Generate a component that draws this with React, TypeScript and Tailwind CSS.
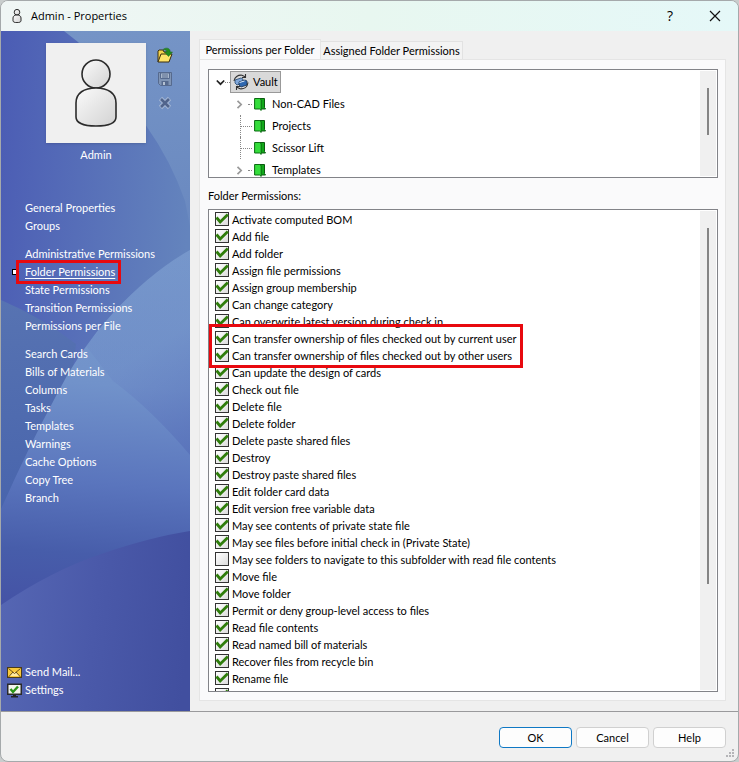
import type { ReactNode } from 'react';

const navGroups = [
  ['General Properties', 'Groups'],
  ['Administrative Permissions', 'Folder Permissions', 'State Permissions', 'Transition Permissions', 'Permissions per File'],
  ['Search Cards', 'Bills of Materials', 'Columns', 'Tasks', 'Templates', 'Warnings', 'Cache Options', 'Copy Tree', 'Branch'],
];

const before = [
  'Activate computed BOM',
  'Add file',
  'Add folder',
  'Assign file permissions',
  'Assign group membership',
  'Can change category',
  'Can overwrite latest version during check in',
];

const highlighted = [
  'Can transfer ownership of files checked out by current user',
  'Can transfer ownership of files checked out by other users',
];

const after = [
  'Can update the design of cards',
  'Check out file',
  'Delete file',
  'Delete folder',
  'Delete paste shared files',
  'Destroy',
  'Destroy paste shared files',
  'Edit folder card data',
  'Edit version free variable data',
  'May see contents of private state file',
  'May see files before initial check in (Private State)',
  'May see folders to navigate to this subfolder with read file contents',
  'Move file',
  'Move folder',
  'Permit or deny group-level access to files',
  'Read file contents',
  'Read named bill of materials',
  'Recover files from recycle bin',
  'Rename file',
  '',
];

const unchecked = ['May see folders to navigate to this subfolder with read file contents'];

const folders = [
  { name: 'Non-CAD Files', expandable: true },
  { name: 'Projects', expandable: false },
  { name: 'Scissor Lift', expandable: false },
  { name: 'Templates', expandable: true },
];

function Backdrop() {
  return (
    <svg className="absolute inset-0 h-full w-full" viewBox="0 0 189 680" preserveAspectRatio="none" aria-hidden="true">
      <defs>
        <linearGradient id="base" x1="0" y1="0" x2="1" y2="0.25">
          <stop offset="0" stopColor="#4b5cb4" />
          <stop offset="1" stopColor="#6484bd" />
        </linearGradient>
        <linearGradient id="corner" x1="0" y1="0" x2="0" y2="1">
          <stop offset="0" stopColor="#7594c6" />
          <stop offset="1" stopColor="#6a89c0" />
        </linearGradient>
        <linearGradient id="left" x1="0" y1="0" x2="0" y2="1">
          <stop offset="0" stopColor="#5773b2" />
          <stop offset="1" stopColor="#4763ac" />
        </linearGradient>
        <linearGradient id="sail" gradientUnits="userSpaceOnUse" x1="110" y1="215" x2="80" y2="610">
          <stop offset="0" stopColor="#7a9ccd" />
          <stop offset="0.35" stopColor="#7192ca" />
          <stop offset="0.6" stopColor="#5a75bd" />
          <stop offset="0.78" stopColor="#475daa" />
          <stop offset="1" stopColor="#434da3" />
        </linearGradient>
        <linearGradient id="shade" gradientUnits="userSpaceOnUse" x1="130" y1="330" x2="189" y2="425">
          <stop offset="0" stopColor="#6178bf" stopOpacity="0.15" />
          <stop offset="1" stopColor="#566fb8" stopOpacity="0.7" />
        </linearGradient>
        <linearGradient id="floor" x1="0" y1="0.4" x2="1" y2="0.5">
          <stop offset="0" stopColor="#5566b3" />
          <stop offset="0.5" stopColor="#4a59a9" />
          <stop offset="1" stopColor="#414f9f" />
        </linearGradient>
      </defs>
      <rect width="189" height="680" fill="url(#base)" />
      <path d="M63 0 L77 11 Q120 55 146 96 Q170 130 184 170 L189 195 V0Z" fill="url(#corner)" />
      <path d="M0 269 Q40 286 75 313 L60 440 L0 500Z" fill="url(#left)" />
      <path d="M189 219 Q150 241 112 282 Q78 319 55 365 Q28 415 0 478 V680 H189Z" fill="url(#sail)" />
      <path d="M85 315 L112 350 Q150 378 189 424 V219 Q150 241 112 282Z" fill="url(#shade)" />
      <path d="M0 574 Q50 540 100 523 Q150 506 189 500 V680 H0Z" fill="url(#floor)" />
    </svg>
  );
}

function Person({ className, thick }: { className: string; thick: number }) {
  return (
    <svg className={className} viewBox="0 0 44 70" aria-hidden="true">
      <defs>
        <linearGradient id="person" x1="0" y1="0" x2="1" y2="1">
          <stop offset="0" stopColor="#fbfbfb" />
          <stop offset="1" stopColor="#d2d2d2" />
        </linearGradient>
      </defs>
      <g fill="url(#person)" stroke="#2b2b2b" strokeWidth={thick}>
        <circle cx="22" cy="16" r="14" />
        <path d="M2 45 C2 35 10 30 22 30 S42 35 42 45 V59 C42 65 34 68 22 68 S2 65 2 59Z" />
      </g>
    </svg>
  );
}

function OpenIcon() {
  return (
    <svg className="size-4" viewBox="0 0 16 16" aria-hidden="true">
      <path d="M1 15V4l1-1h4l1 2h5v3" fill="#f5d34c" stroke="#3a2e10" />
      <path d="M1 15L4 7h11l-3 8Z" fill="#ffe46a" stroke="#3a2e10" />
      <path d="M6 2.500C9 0 13.500 1 13.200 5H15.500L11.500 9.500 7.500 5H10C10 3.500 8.500 2.500 6 2.500Z" fill="#258c1f" stroke="#1d6d18" strokeWidth=".5" />
    </svg>
  );
}

function SaveIcon() {
  return (
    <svg className="size-4" viewBox="0 0 16 16" aria-hidden="true">
      <path d="M1.500 1.500h13v13h-11l-2-2Z" fill="#8095b5" stroke="#566a8e" />
      <path d="M3.500 2h9v5.500h-9Z" fill="#a9b8cc" stroke="#566a8e" />
      <path d="M5 4h6M5 6h6" stroke="#566a8e" />
      <path d="M4.500 10h7v4h-7Z" fill="#566a8e" />
      <path d="M6 11h2v3H6Z" fill="#b4c1d2" />
    </svg>
  );
}

function DeleteIcon() {
  return (
    <svg className="size-4" viewBox="0 0 16 16" aria-hidden="true">
      <path d="M3.500 3.500l9 9M12.500 3.500l-9 9" stroke="#a3b6d4" strokeWidth="4.600" />
      <path d="M4 4l8 8M12 4l-8 8" stroke="#50648c" strokeWidth="2.600" />
    </svg>
  );
}

function MailIcon() {
  return (
    <svg className="h-4 w-[15px]" viewBox="0 0 15 16" aria-hidden="true">
      <rect x=".5" y="3.500" width="14" height="10" fill="#f8c93c" stroke="#4a3b18" />
      <path d="M2 12l4-4h3l4 4Z" fill="#ffeaa0" />
      <path d="M1.500 4.500l6 5 6-5M1.500 13l4.500-5M13.500 13L9 8" fill="none" stroke="#6b4e12" />
    </svg>
  );
}

function MonitorIcon() {
  return (
    <svg className="h-4 w-[15px]" viewBox="0 0 15 16" aria-hidden="true">
      <path d="M6 12h3v2h2v1.500H4V14h2Z" fill="#222" />
      <rect x=".75" y="2.250" width="13.500" height="10" fill="#f4f4ee" stroke="#2a2a2a" strokeWidth="1.500" />
      <path d="M3.500 7l2.500 3L11 4.500" fill="none" stroke="#2b9418" strokeWidth="2.400" />
    </svg>
  );
}

function VaultIcon() {
  return (
    <svg className="size-4" viewBox="0 0 16 16" aria-hidden="true">
      <path d="M2 6l6-2 2 1v4l-6 2-2-2Z" fill="#7fa7da" stroke="#24466f" strokeWidth=".8" />
      <path d="M6 8l6-2 2 1v4l-6 2-2-2Z" fill="#2f68b0" stroke="#1b3557" strokeWidth=".8" />
      <path d="M6.500 8.500l5-1.500" stroke="#dcecff" />
      <path d="M1 7C1.500 3 5 .8 9 1.200L12.500 3M12.500 0v3.500H9" fill="none" stroke="#333" strokeWidth="1.100" />
      <path d="M15 8.500C14.500 13 11 15.200 7 14.800L3.500 13M3.500 16v-3.500H7" fill="none" stroke="#333" strokeWidth="1.100" />
    </svg>
  );
}

function FolderIcon() {
  return (
    <svg className="h-[14px] w-3" viewBox="0 0 12 14" aria-hidden="true">
      <path d="M5 1.500h5.500v9l1 1.500H6Z" fill="#12a81a" stroke="#0b5a10" />
      <path d="M.6 1.500H5.500L7.200 2.600V13.400L5.500 12H.6Z" fill="#35dd3c" stroke="#0b6a12" />
    </svg>
  );
}

function Chevron({ down = false }: { down?: boolean }) {
  return (
    <svg className={down ? 'size-[9px]' : 'size-[9px] -rotate-90'} viewBox="0 0 9 9" aria-hidden="true">
      <path d="M.8 2.500l3.700 3.700 3.700-3.700" fill="none" stroke={down ? '#222' : '#999'} strokeWidth="1.700" />
    </svg>
  );
}

function Permission({ label }: { label: string }) {
  return (
    <label className="flex h-[17px] items-start gap-[3px] whitespace-nowrap">
      <span className="grid shrink-0 pt-px">
        <input
          type="checkbox"
          defaultChecked={!unchecked.includes(label)}
          className="peer col-start-1 row-start-1 size-[14px] appearance-none border border-[#333] bg-linear-to-br from-white to-[#dcdcdc]"
        />
        <svg className="pointer-events-none invisible col-start-1 row-start-1 size-[14px] peer-checked:visible" viewBox="0 0 14 14" aria-hidden="true">
          <path d="M1.500 5.500L5.200 10 12.800 2.500" fill="none" stroke="#2f7d0b" strokeWidth="2.800" />
        </svg>
      </span>
      <span>{label}</span>
    </label>
  );
}

function ScrollPane({ className, thumb, children }: { className: string; thumb: string; children: ReactNode }) {
  return (
    <div className={`flex border border-[#828388] bg-white pr-px ${className}`}>
      <div className="min-w-0 flex-1 overflow-hidden">{children}</div>
      <div className="my-px flex w-4 justify-center bg-[#f0f0f0]">
        <div className={`w-[2px] bg-[#858585] ${thumb}`} />
      </div>
    </div>
  );
}

function DialogButton({ children, primary = false }: { children: ReactNode; primary?: boolean }) {
  return (
    <button className={`h-[21px] w-[73px] rounded border bg-[#fdfdfd] ${primary ? 'border-[#0f78c4]' : 'border-[#d0d0d0]'}`}>
      {children}
    </button>
  );
}

export default function App() {
  return (
    <div className="h-screen bg-[#c9cdcd] font-['Lato','Liberation_Sans',sans-serif] text-[11px] leading-[18px] text-black">
      <main className="flex h-full flex-col overflow-hidden rounded-lg border border-[#a5a9ab] bg-[#f0f0f0]">
        <header className="flex h-[30px] shrink-0 items-center bg-linear-to-r from-[#f0f6f5] via-[#e8f7f0] to-[#e5f8f8] pr-[17px] pl-[11px] font-['Open_Sans',sans-serif] text-[11px]">
          <Person className="h-[14px] w-[10px]" thick={5} />
          <h1 className="flex-1 pl-[9px]">Admin - Properties</h1>
          <button aria-label="Help" className="mr-9 text-sm">?</button>
          <button aria-label="Close">
            <svg className="size-[12px]" viewBox="0 0 12 12" aria-hidden="true">
              <path d="M1 1l10 10M11 1L1 11" stroke="#111" strokeWidth="1.200" />
            </svg>
          </button>
        </header>

        <div className="flex min-h-0 flex-1">
          <aside className="relative w-[189px] shrink-0 text-white">
            <Backdrop />
            <div className="relative flex h-full flex-col pt-3 pb-3">
              <div className="flex gap-[11px] pl-[45px]">
                <div className="flex w-[100px] flex-col items-center">
                  <div className="flex size-[100px] items-center justify-center bg-[#f0f0f0] shadow">
                    <Person className="h-[70px] w-[44px]" thick={1.6} />
                  </div>
                  <p className="mt-[3px]">Admin</p>
                </div>
                <div className="flex flex-col gap-2 pt-1">
                  <button aria-label="Open picture"><OpenIcon /></button>
                  <button aria-label="Save picture"><SaveIcon /></button>
                  <button aria-label="Remove picture"><DeleteIcon /></button>
                </div>
              </div>

              <nav className="mt-[35px] flex flex-col gap-[10px] pl-6">
                {navGroups.map((group) => (
                  <ul key={group[0]}>
                    {group.map((item) =>
                      item === 'Folder Permissions' ? (
                        <li key={item} className="relative w-fit">
                          <span className="absolute top-[6px] -left-[13px] size-[6px] border border-black bg-white" />
                          <span className="pointer-events-none absolute -top-[3px] -right-[6px] -bottom-[3px] -left-[9px] border-3 border-[#e8090f]" />
                          <a href="#folder-permissions" className="underline underline-offset-2">{item}</a>
                        </li>
                      ) : (
                        <li key={item}><a href="#page">{item}</a></li>
                      ),
                    )}
                  </ul>
                ))}
              </nav>

              <ul className="mt-auto pl-[6px]">
                <li><a href="#mail" className="flex items-center gap-[3px]"><MailIcon />Send Mail...</a></li>
                <li><a href="#settings" className="flex items-center gap-[3px]"><MonitorIcon />Settings</a></li>
              </ul>
            </div>
          </aside>

          <section className="flex min-w-0 flex-1 flex-col pt-2 pr-3 pb-[10px] pl-[9px]">
            <div role="tablist" className="flex items-end">
              <button role="tab" aria-selected="true" className="-mb-px h-[21px] w-[122px] border border-b-0 border-[#e5e5e5] bg-[#fafafb] pb-px whitespace-nowrap">
                Permissions per Folder
              </button>
              <button role="tab" aria-selected="false" className="h-[18px] w-[142px] border border-b-0 border-l-0 border-[#e2e2e2] bg-[#f3f3f3] whitespace-nowrap">
                Assigned Folder Permissions
              </button>
            </div>

            <div className="flex min-h-0 flex-1 flex-col border border-[#e5e5e5] bg-[#fafafb] px-2 pr-[7px] pt-[9px] pb-2">
              <ScrollPane className="h-[109px] shrink-0" thumb="mt-[17px] h-[47px]">
                <ul role="tree" className="pt-px pl-[7px]">
                  <li role="treeitem" aria-expanded="true">
                    <div className="flex h-[22px] items-center">
                      <Chevron down />
                      <span className="w-[5px] border-t border-dotted border-[#888]" />
                      <button className="flex h-[22px] w-[51px] items-center gap-1 border border-[#999] bg-[#d9d9d9] pl-[2px]">
                        <VaultIcon />
                        Vault
                      </button>
                    </div>
                    <ul role="group" className="ml-[15px]">
                      {folders.map(({ name, expandable }) => (
                        <li role="treeitem" key={name} className="flex h-[22px] items-center">
                          {expandable ? (
                            <span className="flex w-[17px] items-center pl-[4px]">
                              <Chevron />
                            </span>
                          ) : (
                            <span className="ml-[9px] h-[22px] w-2 border-l border-dotted border-[#888]" />
                          )}
                          <span className={`border-t border-dotted border-[#888] ${expandable ? 'w-[4px]' : '-ml-[7px] w-[11px]'}`} />
                          <span className="flex items-center gap-[6px] pl-[2px]"><FolderIcon />{name}</span>
                        </li>
                      ))}
                    </ul>
                  </li>
                </ul>
              </ScrollPane>

              <h2 className="my-[6px] h-[19px] shrink-0 leading-6">Folder Permissions:</h2>

              <ScrollPane className="min-h-0 flex-1" thumb="mt-[17px] h-[356px]">
                <div className="flex h-full flex-col pt-px pl-[6px] *:shrink-0">
                  {before.map((label) => <Permission key={label} label={label} />)}
                  <div className="relative w-fit">
                    {highlighted.map((label) => <Permission key={label} label={label} />)}
                    <div className="pointer-events-none absolute -top-[6px] -right-[6px] -bottom-[4px] -left-[6px] border-3 border-[#e8090f]" />
                  </div>
                  {after.map((label) => <Permission key={label} label={label} />)}
                </div>
              </ScrollPane>
            </div>
          </section>
        </div>

        <footer className="relative flex h-[50px] shrink-0 justify-end gap-1 border-t border-[#9a9a9c] pt-[15px] pr-3">
          <DialogButton primary>OK</DialogButton>
          <DialogButton>Cancel</DialogButton>
          <DialogButton>Help</DialogButton>
          <svg className="absolute right-1 bottom-1 size-2" viewBox="0 0 8 8" aria-hidden="true">
            <path d="M6 0h2v2H6zM3 3h2v2H3zM6 3h2v2H6zM0 6h2v2H0zM3 6h2v2H3zM6 6h2v2H6z" fill="#b5b5b8" />
          </svg>
        </footer>
      </main>
    </div>
  );
}
